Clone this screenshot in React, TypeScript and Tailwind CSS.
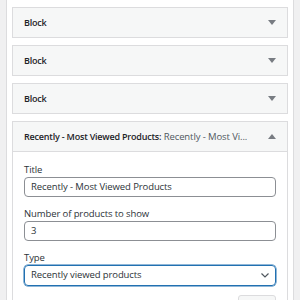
const font = { fontFamily: '"Open Sans", "Noto Sans", sans-serif' };

const Arrow = ({ up = false }: { up?: boolean }) => (
  <svg width="8" height="5" viewBox="0 0 8 5" className="shrink-0">
    <path d={up ? 'M0 5 L4 0 L8 5 Z' : 'M0 0 L8 0 L4 5 Z'} fill="#787c82" />
  </svg>
);

const CollapsedBlock = ({ title }: { title: string }) => (
  <div className="mb-[7px] flex h-[31px] items-center justify-between border border-[#dcdcde] bg-[#f6f7f7] pl-[11px] pr-[11px]">
    <span className="pt-px text-[9px] font-semibold tracking-[-0.2px] text-[#1d2327]">{title}</span>
    <Arrow />
  </div>
);

const Field = ({ label, children }: { label: string; children: React.ReactNode }) => (
  <div className="mb-[11px]">
    <div className="mb-px h-[12px] text-[9.5px] leading-[12px] tracking-[-0.1px] text-[#2c3338]">{label}</div>
    {children}
  </div>
);

export default function App() {
  return (
    <div className="h-[300px] w-[300px] overflow-hidden bg-[#f0f0f1]" style={font}>
      <div className="ml-[6px] h-full w-[288px] border-x border-[#dcdcde] bg-white px-[5px] pt-[7px]">
        <CollapsedBlock title="Block" />
        <CollapsedBlock title="Block" />
        <CollapsedBlock title="Block" />

        {/* widget ouvert */}
        <div className="border border-[#dcdcde] bg-white">
          <div className="flex h-[30px] items-center justify-between border-b border-[#dcdcde] bg-[#f6f7f7] px-[11px]">
            <span className="truncate pt-px text-[9.5px] tracking-[-0.1px] text-[#50575e]">
              <span className="text-[9px] font-semibold tracking-[-0.2px] text-[#1d2327]">Recently - Most Viewed Products:</span> Recently - Most Vi...
            </span>
            <Arrow up />
          </div>
          <div className="px-[11px] pt-[12px]">
            <Field label="Title">
              <div className="flex h-[20px] items-center rounded-[4px] border border-[#8c8f94] px-[6px] text-[9.5px] tracking-[-0.1px] text-[#2c3338]">
                Recently - Most Viewed Products
              </div>
            </Field>
            <Field label="Number of products to show">
              <div className="flex h-[20px] items-center rounded-[4px] border border-[#8c8f94] px-[6px] text-[9.5px] text-[#2c3338]">
                3
              </div>
            </Field>
            <Field label="Type">
              <div className="mt-px flex h-[21px] items-center justify-between rounded-[4px] border border-[#2271b1] px-[6px] text-[9.5px] tracking-[-0.1px] text-[#2c3338] shadow-[0_0_0_0.5px_#2271b1]">
                <span>Recently viewed products</span>
                <svg width="8" height="5" viewBox="0 0 8 5">
                  <path d="M0.5 0.5 L4 4 L7.5 0.5" fill="none" stroke="#50575e" strokeWidth="1.2" />
                </svg>
              </div>
            </Field>
            <div className="flex items-start justify-between">
              <span className="text-[9.5px] tracking-[-0.1px] text-[#d63638]">Related Products</span>
              <div className="mt-[-2px] h-[20px] w-[38px] rounded-[3px] border border-[#dcdcde] bg-[#f6f7f7]" />
            </div>
          </div>
        </div>
      </div>
    </div>
  );
}
